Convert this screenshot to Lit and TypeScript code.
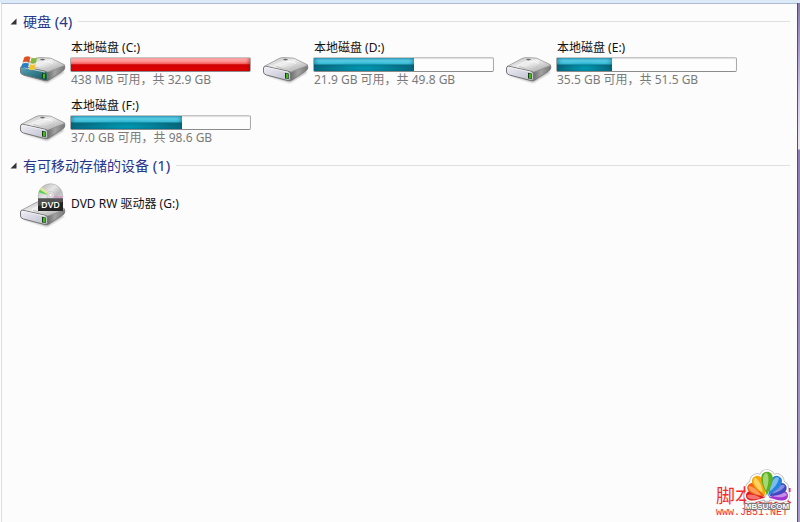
import { LitElement, html, css, svg, nothing } from "lit";
import { customElement, property } from "lit/decorators.js";

interface Drive {
  name: string;
  kind: "system" | "disk" | "dvd";
  detail?: string;
  used?: number;
}

interface Group {
  title: string;
  drives: Drive[];
}

const groups: Group[] = [
  {
    title: "硬盘",
    drives: [
      { name: "本地磁盘 (C:)", kind: "system", detail: "438 MB 可用，共 32.9 GB", used: 100 },
      { name: "本地磁盘 (D:)", kind: "disk", detail: "21.9 GB 可用，共 49.8 GB", used: 56 },
      { name: "本地磁盘 (E:)", kind: "disk", detail: "35.5 GB 可用，共 51.5 GB", used: 31 },
      { name: "本地磁盘 (F:)", kind: "disk", detail: "37.0 GB 可用，共 98.6 GB", used: 62 },
    ],
  },
  {
    title: "有可移动存储的设备",
    drives: [{ name: "DVD RW 驱动器 (G:)", kind: "dvd" }],
  },
];

@customElement("drive-icon")
export class DriveIcon extends LitElement {
  @property() kind = "disk";

  static styles = css`
    :host { display: block; flex: none; width: 48px; }
    .art { display: block; width: 48px; height: 49px; overflow: visible; }
    .dvd { height: 42px; }
    .label { font: 600 9px "Open Sans", "Noto Sans", sans-serif; }
  `;

  render() {
    const system = this.kind === "system";
    const dvd = this.kind === "dvd";
    return html`<svg class="art ${dvd ? "dvd" : ""}" viewBox=${dvd ? "0 -7 48 42" : "0 -9 48 49"} aria-hidden="true">
      <defs>
        <linearGradient id="top" x1="0" y1="0" x2="1" y2="1">
          <stop offset="0" stop-color="#b4b4b4"/><stop offset=".45" stop-color="#f0f0f0"/>
          <stop offset=".7" stop-color="#c8c8c8"/><stop offset="1" stop-color="#9a9a9a"/>
        </linearGradient>
        <linearGradient id="side" x1="0" y1="0" x2="1" y2="0">
          <stop offset="0" stop-color="#5c5c5c"/><stop offset=".5" stop-color="#a2a2a2"/><stop offset="1" stop-color="#777"/>
        </linearGradient>
        <linearGradient id="front" x1="0" y1="0" x2="1" y2="1">
          <stop offset="0" stop-color=${system ? "#5aa9bd" : "#efeff7"}/>
          <stop offset="1" stop-color=${system ? "#12505a" : "#bdbdcd"}/>
        </linearGradient>
        <linearGradient id="disc" x1="0" y1="0" x2="1" y2="1">
          <stop offset="0" stop-color="#aaa"/><stop offset=".4" stop-color="#e6e6e6"/>
          <stop offset=".6" stop-color="#bcbcbc"/><stop offset="1" stop-color="#ededed"/>
        </linearGradient>
        <filter id="soft" x="-20%" y="-50%" width="140%" height="200%"><feGaussianBlur stdDeviation="1"/></filter>
      </defs>
      <g transform=${dvd ? "translate(0 2)" : "translate(0 0)"}>
        <path d="M5 27 L29 34.5 L46 24 L42 21Z" fill="#000" opacity=".35" filter="url(#soft)"/>
        <path d="M28 24 L46.500 17 Q47.500 20 46 22 L31 32 Q29 33 27 32.500Z" fill="url(#side)" stroke="#666" stroke-width=".6"/>
        <path d="M3 18.500 L18 10.500 Q20 9.500 23 9.600 L31 10 Q33 10 34.500 11 L46 16.500 Q47 17.300 45.500 18 L31 23.800 Q29.500 24.300 27.500 23.900Z" fill="url(#top)" stroke="#8b8b8b" stroke-width=".7"/>
        <path d="M14 17.600 Q21 12.500 29 13.500 Q37 14.700 34 17.500 Q29 21 21 20" fill="none" stroke="#fff" stroke-width=".8" opacity=".8"/>
        <path d="M15 18.300 Q21 21.500 29 20 Q34 18.500 35.500 16" fill="none" stroke="#aaa" stroke-width=".6"/>
        <ellipse cx="24.500" cy="11.600" rx="2.400" ry=".8" fill="#6c6c6c"/>
        <path d="M2.500 20 Q2.500 18 5 18.300 L27 23.200 Q29.500 23.700 29.500 26 V30.500 Q29.500 33.200 27 32.600 L5.500 27 Q2.500 26.200 2.500 24Z" fill="url(#front)" stroke="#777" stroke-width="1"/>
        <path d="M4 19 L27 24.100" stroke="#fff" stroke-width=".8" opacity=".8"/>
        <path d="M24 24.800 L27.700 25.500 V31.200 L24 30.400Z" fill="#173d12"/>
        <path d="M26 25.800 V30.500" stroke="#55e51c" stroke-width="1.500"/>
      </g>
      ${system ? svg`
        <g stroke="#fff" stroke-opacity=".35" stroke-width=".4">
          <path d="M6.200 9.200 Q9.500 7.200 12.500 9 L11.300 14.600 Q8 13 4.500 14.700Z" fill="#dd5222"/>
          <path d="M13.500 9.500 Q16.500 11 19.300 9.300 L18 15 Q15 16.500 12.300 15.100Z" fill="#83b640"/>
          <path d="M4.200 15.700 Q7.800 14 11 15.700 L9.800 20.600 Q6.500 19 2.800 20.700Z" fill="#277fc1"/>
          <path d="M12 16.200 Q15 17.500 17.800 16.100 L16.500 21.500 Q13.500 22.700 10.800 21.200Z" fill="#f6c22c"/>
        </g>` : nothing}
      ${dvd ? svg`
        <circle cx="32.500" cy="6" r="12.300" fill="url(#disc)" stroke="#aaa" stroke-width=".6"/>
        <path d="M32.500 6 L20.800 2.300 L22 -.2Z" fill="#35d835" opacity=".85"/>
        <path d="M32.500 6 L22 -.2 L24 -3Z" fill="#eee98a" opacity=".8"/>
        <path d="M32.500 6 L44 10 L44.800 6Z" fill="#d988c4" opacity=".6"/>
        <circle cx="32.500" cy="5" r="3.700" fill="#e6dfe2" stroke="#bbb" stroke-width=".6"/>
        <circle cx="32.500" cy="5" r="1.600" fill="#fff" stroke="#b7a6b0" stroke-width=".5"/>
        <path d="M20 8.500 H45 V21 H20Z" fill="#242424"/>
        <path d="M20 8.500 H45 V12 L20 16Z" fill="#666" opacity=".7"/>
        <text class="label" x="32.500" y="18" text-anchor="middle" fill="#fff">DVD</text>` : nothing}
    </svg>`;
  }
}

@customElement("drive-tile")
export class DriveTile extends LitElement {
  @property({ attribute: false }) drive!: Drive;

  static styles = css`
    :host { display: block; }
    .tile { display: flex; align-items: center; gap: 4px; }
    .body { flex: none; width: 181px; }
    .name, .detail { padding-left: 1px; line-height: 16px; white-space: nowrap; }
    .name { color: #111; }
    .detail { color: #7a7a7a; }
    .bar { box-sizing: border-box; height: 15px; margin-top: 1px; border: 1px solid #aaa; border-top-color: #c4c4c4; border-bottom-color: #8c8c8c; border-radius: 2px; background: #fdfdfd; box-shadow: inset 0 1px 1px #ddd; }
    .fill { height: 100%; background: radial-gradient(ellipse 45% 60% at 50% 90%, #00a5c0, #00a5c000), linear-gradient(#4cc3e2 0, #60d4ee 20%, #32b4d0 48%, #08687c 52%, #067890 100%); box-shadow: inset -2px 0 4px #00506866, inset 2px 0 4px #00506866; }
    .full { background: linear-gradient(#ffc0c0 0, #f88 30%, #f06060 44%, #d00000 52%, #e00000 100%); box-shadow: inset -2px 0 3px #b0000066; }
  `;

  render() {
    const { name, kind, detail, used } = this.drive;
    return html`<div class="tile">
      <drive-icon .kind=${kind}></drive-icon>
      <div class="body">
        <div class="name">${name}</div>
        ${used === undefined ? nothing : html`
          <div class="bar" role="meter" aria-label=${name} aria-valuemin="0" aria-valuemax="100" aria-valuenow=${used}>
            <div class="fill ${used > 90 ? "full" : ""}" style="width:${used}%"></div>
          </div>
          <div class="detail">${detail}</div>`}
      </div>
    </div>`;
  }
}

@customElement("site-mark")
export class SiteMark extends LitElement {
  static styles = css`
    :host { display: block; }
    .mark { position: relative; width: 76px; color: #f42c2e; }
    .site { font: 19px/20px "Liberation Sans", "Noto Sans CJK SC", sans-serif; white-space: nowrap; }
    .url { font: 10px/12px "Liberation Mono", monospace; white-space: nowrap; }
    .flower { position: absolute; right: 0; bottom: 0; width: 50px; height: 52px; overflow: visible; }
    .brand { font: 700 8px "Liberation Sans", sans-serif; }
  `;

  render() {
    const petals: [number, number, string, string][] = [
      [-82, 0.84, "#dc1c20", "#ff9a90"], [82, 0.84, "#a038d0", "#dcb0f4"],
      [-56, 0.9, "#f06010", "#ffb878"], [56, 0.9, "#4048c0", "#a0acf0"],
      [-30, 0.98, "#f4a808", "#ffe68c"], [30, 0.98, "#2484dc", "#a4d4f8"],
      [0, 1.04, "#5cb024", "#c4e894"],
    ];
    const shape = "M0 -2 C-2 -9 -6 -13 -5.500 -20 C-5 -27 5 -27 5.500 -20 C6 -13 2 -9 0 -2Z";
    return html`<div class="mark">
      <div class="site">脚本之家</div>
      <div class="url">www.JB51.NET</div>
      <svg class="flower" viewBox="0 0 50 52" aria-hidden="true">
        ${[["#b4b4b4", 5], ["#fff", 3.6]].map(([color, width]) => petals.map(([angle, size]) => svg`
          <path transform="translate(25 31) rotate(${angle}) scale(${size})" d=${shape} fill=${color} stroke=${color} stroke-width=${width}/>`))}
        ${petals.map(([angle, size, dark, light]) => svg`<g transform="translate(25 31) rotate(${angle}) scale(${size})">
          <path d=${shape} fill=${dark}/>
          <path d="M-1 -7 C-5 -14 -5 -24 0 -24 C2 -21 2 -14 -1 -7Z" fill=${light} opacity=".7"/>
        </g>`)}
        <text class="brand" x="25" y="42" text-anchor="middle" fill="#fff" stroke="#777" stroke-width="2" paint-order="stroke">MBSU.COM</text>
      </svg>
    </div>`;
  }
}

@customElement("app-root")
export class AppRoot extends LitElement {
  static styles = css`
    :host { display: block; font: 12px "Noto Sans", "Noto Sans CJK SC", sans-serif; }
    .window { box-sizing: border-box; position: relative; display: flex; min-height: 100vh; padding-left: 1px; background: #fcfcfc; border-top: 3px solid #dce9f7; }
    .pane { flex: 1; min-width: 0; border-top: 1px solid #adbcd4; border-left: 1px solid #d5e0f3; padding: 7px 7px 0 0; }
    .edge { flex: none; width: 2px; border-left: 1px solid #55506a; background: linear-gradient(#8a7caf 0, #a99bd0 45px, #d6cdea 100px, #ece5ef 146px, #8c7bb5 147px, #a79acb 100%); }
    .group { padding: 0 0 9px 8px; }
    .head { display: flex; align-items: center; gap: 6px; }
    .toggle { display: flex; align-items: center; gap: 6px; height: 20px; margin: 0; border: 0; padding: 0; background: none; color: #26368c; font: 14px/20px "Noto Sans", "Noto Sans CJK SC", sans-serif; white-space: nowrap; }
    .count { font-size: 15px; }
    .arrow { width: 7px; height: 7px; }
    .rule { flex: 1; height: 1px; background: #e0e0e3; }
    .drives { display: grid; grid-template-columns: repeat(auto-fill, 243px); row-gap: 9px; padding: 8px 0 0 8px; }
    .mark { position: absolute; right: 8px; bottom: 3px; }
  `;

  render() {
    return html`<div class="window">
      <main class="pane">
        ${groups.map((g) => html`<section class="group">
          <div class="head">
            <button class="toggle" type="button" aria-expanded="true">
              <svg class="arrow" viewBox="0 0 7 7" aria-hidden="true"><path d="M6.500 .5 V6.500 H.5Z" fill="#333"/></svg>
              <span>${g.title} <span class="count">(${g.drives.length})</span></span>
            </button>
            <div class="rule"></div>
          </div>
          <div class="drives">${g.drives.map((d) => html`<drive-tile .drive=${d}></drive-tile>`)}</div>
        </section>`)}
      </main>
      <div class="edge"></div>
      <site-mark class="mark"></site-mark>
    </div>`;
  }
}
